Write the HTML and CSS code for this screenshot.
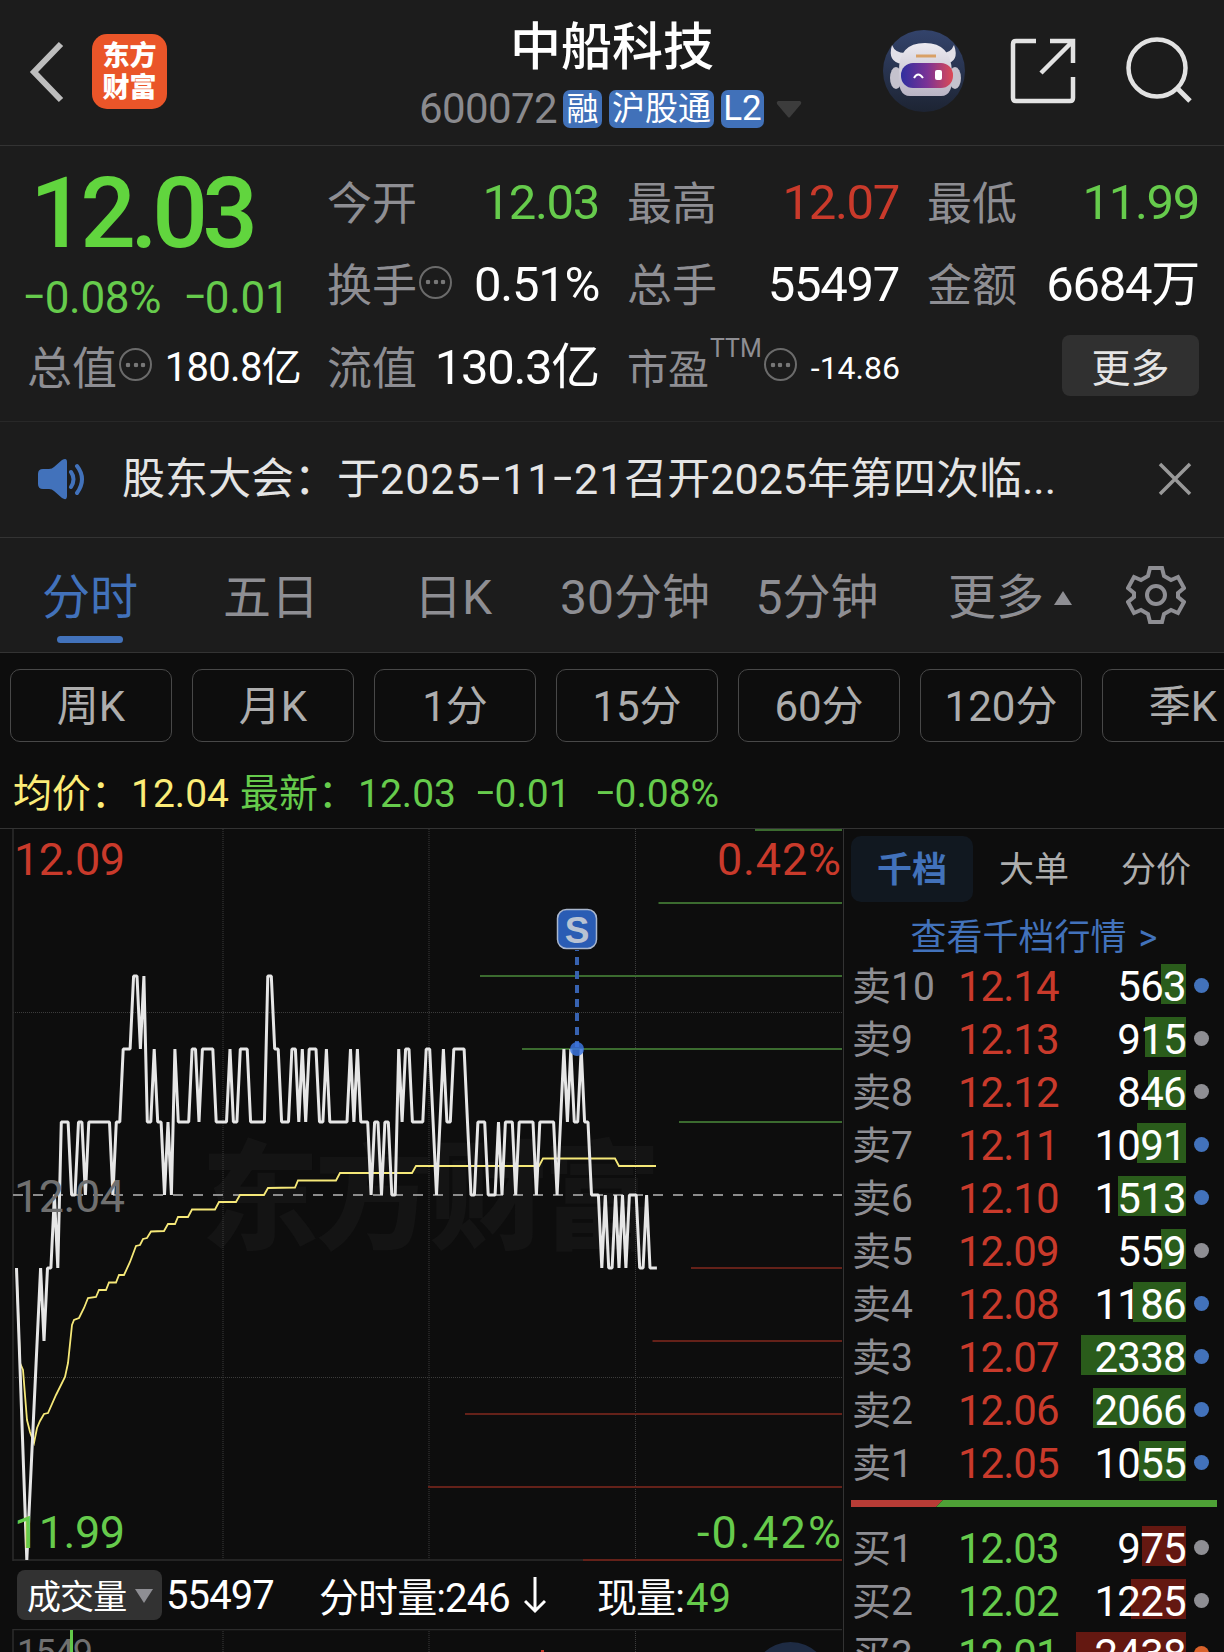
FILE: index.html
```html
<!DOCTYPE html>
<html lang="zh-CN">
<head>
  <meta charset="UTF-8">
  <title>中船科技 600072</title>
  <link rel="stylesheet" href="styles.css">
</head>
<body>
  <header class="topbar">
    <div class="topbar-left">
      <svg class="back" width="36" height="64" viewBox="0 0 36 64"><path d="M33 4 L6 32 L33 60" fill="none" stroke="#bdbdbd" stroke-width="6"/></svg>
      <div class="logo"><span>东方</span><span>财富</span></div>
    </div>
    <div class="stock">
      <h1>中船科技</h1>
      <div class="stock-sub">
        <span class="code">600072</span>
        <span class="tag tag-rong">融</span>
        <span class="tag tag-hgt">沪股通</span>
        <span class="tag tag-l2">L2</span>
        <svg class="caret" width="26" height="17" viewBox="0 0 26 17"><path d="M2 0h22q2 1 1 3L14 16q-1 1-2 0L1 3Q0 1 2 0z" fill="#3c3c3c"/></svg>
      </div>
    </div>
    <div class="topbar-right">
      <svg class="robot" width="82" height="82" viewBox="0 0 82 82">
        <defs>
          <linearGradient id="sky" x1="0" y1="0" x2="0" y2="1"><stop offset="0" stop-color="#33436b"/><stop offset="1" stop-color="#1d2433"/></linearGradient>
          <linearGradient id="visor"><stop offset="0" stop-color="#2f2f9f"/><stop offset=".5" stop-color="#7a3296"/><stop offset="1" stop-color="#dc4a55"/></linearGradient>
          <linearGradient id="helmet" x1="0" y1="0" x2="0" y2="1"><stop offset="0" stop-color="#eceaf0"/><stop offset="1" stop-color="#b9b4c4"/></linearGradient>
        </defs>
        <circle cx="41" cy="41" r="41" fill="url(#sky)"/>
        <path d="M19 34 Q4 32 9 15 Q12 23 22 23zM62 34 Q77 32 71 15 Q68 23 59 23z" fill="#e2e0e8"/>
        <ellipse cx="13" cy="48" rx="6" ry="11" fill="#c5c2cd"/>
        <ellipse cx="72" cy="48" rx="6" ry="11" fill="#c5c2cd"/>
        <path d="M16 42 Q15 13 42 13 Q68 13 69 42 Q71 66 58 66 H27 Q14 66 16 42z" fill="url(#helmet)"/>
        <rect x="18" y="33" width="52" height="25" rx="12" fill="url(#visor)"/>
        <path d="M31 48q4-7 9 0" fill="none" stroke="#fff" stroke-width="2"/>
        <rect x="52" y="40" width="7" height="10" rx="2" fill="#fff"/>
        <path d="M33 26h20" stroke="#d9a066" stroke-width="3"/>
      </svg>
      <svg class="share" width="66" height="66" viewBox="0 0 66 66"><path d="M26 3H6Q3 3 3 6v54q0 3 3 3h54q3 0 3-3V39M40 3h23v22M62 4L31 35" fill="none" stroke="#e2e2e2" stroke-width="4.5"/></svg>
      <svg class="search" width="68" height="68" viewBox="0 0 68 68"><circle cx="32" cy="32" r="28.500" fill="none" stroke="#e2e2e2" stroke-width="4.500"/><path d="M51 51L65 65" stroke="#e2e2e2" stroke-width="5"/></svg>
    </div>
  </header>

  <section class="quote">
    <div class="price-box">
      <div class="price">12.03</div>
      <div class="change"><span><s>-</s>0.08%</span><span><s>-</s>0.01</span></div>
    </div>
    <div class="cell"><label>今开</label><b class="down">12.03</b></div>
    <div class="cell"><label>最高</label><b class="up">12.07</b></div>
    <div class="cell"><label>最低</label><b class="down">11.99</b></div>
    <div class="cell"><label>换手</label><i class="dots"></i><b>0.51%</b></div>
    <div class="cell"><label>总手</label><b>55497</b></div>
    <div class="cell"><label>金额</label><b>6684万</b></div>
    <div class="cell"><label>总值</label><i class="dots"></i><b class="mid">180.8亿</b></div>
    <div class="cell"><label>流值</label><b>130.3亿</b></div>
    <div class="cell"><label class="pe">市盈<sup>TTM</sup></label><i class="dots"></i><b class="small">-14.86</b></div>
    <div class="cell"><button class="more">更多</button></div>
  </section>

  <section class="notice">
    <svg class="horn" width="50" height="42" viewBox="0 0 50 42">
      <path d="M1 16q0-5 5-5h6q3 0 5-2l8-7q5-3 5 2v34q0 5-5 2l-8-7q-2-2-5-2H6q-5 0-5-5z" fill="#4272bb"/>
      <path d="M34 14q5 7 0 15M40 8q10 13 0 27" fill="none" stroke="#4272bb" stroke-width="4" stroke-linecap="round"/>
    </svg>
    <p>股东大会：于<span class="date">2025<s>-</s>11<s>-</s>21</span>召开2025年第四次临...</p>
    <svg class="close" width="34" height="34" viewBox="0 0 34 34"><path d="M2 2L32 32M32 2L2 32" stroke="#999" stroke-width="3.500"/></svg>
  </section>

  <nav class="tabs">
    <a class="active">分时</a>
    <a>五日</a>
    <a>日K</a>
    <a>30分钟</a>
    <a>5分钟</a>
    <a class="tab-more">更多<i class="tri-up"></i></a>
    <svg class="gear" width="60" height="60" viewBox="0 0 60 60">
      <path d="M24 3h12l2 8 7 4 7-3 6 11-6 5v4l6 5-6 11-7-3-7 4-2 8H24l-2-8-7-4-7 3-6-11 6-5v-4l-6-5 6-11 7 3 7-4z" fill="none" stroke="#8e8e93" stroke-width="4"/>
      <circle cx="30" cy="30" r="9" fill="none" stroke="#8e8e93" stroke-width="4"/>
    </svg>
  </nav>

  <div class="periods">
    <a>周K</a><a>月K</a><a>1分</a><a>15分</a><a>60分</a><a>120分</a><a>季K</a>
  </div>

  <div class="legend">
    <span class="avg">均价：<span>12.04</span></span>
    <span class="last">最新：<span>12.03</span></span>
    <span class="diff"><s>-</s>0.01</span>
    <span class="pct"><s>-</s>0.08%</span>
  </div>

  <main class="board">
    <div class="chart-col">
      <svg class="chart" width="843" height="733" viewBox="0 829 843 733">
        <text class="watermark" x="201" y="1240" textLength="460">东方财富</text>
        <path class="grid" d="M223 829V1560M429 829V1560M635.500 829V1560M13 1012.500H842M13 1377.500H842"/>
        <path class="frame" d="M13 829V1561M13 1560H842"/>
        <g id="depth"></g>
        <path class="mid-line" d="M13 1195H842"/>
        <polyline class="avg-line" points="16.500,1268 20,1363 23,1370 27,1420 30,1432 34,1443 37,1428 40,1421 44,1414 48,1413 56,1395 65,1377 68,1363 72,1325 74,1320 79,1318 84,1308 88,1298 96,1297 99,1290 106,1290 109,1282.500 116,1282.500 119,1275 124,1275 130,1262 136,1246 140,1245 143,1239 147,1238 151,1231.500 164,1231 168,1224 175,1224 178,1217 188,1217 192,1209.500 215,1209.500 219,1202 236,1202 240,1195 264,1195 268,1188 295,1187.500 298,1180.500 336,1180.500 340,1173 412,1173 416,1166 539,1166 543,1158.500 615,1158.500 619,1166 656,1166"/>
        <polyline class="price-line" id="priceLine"/>
        <text class="axis up" x="14" y="875" textLength="111">12.09</text>
        <text class="axis flat" x="14" y="1212" textLength="111">12.04</text>
        <text class="axis down" x="14" y="1548" textLength="111">11.99</text>
        <text class="axis up" x="717" y="875" textLength="124">0.42%</text>
        <text class="axis down" x="697" y="1548" textLength="144">-0.42%</text>
        <path class="signal-line" d="M577 950V1047"/>
        <circle cx="577" cy="1049" r="7" fill="#3c76df" fill-opacity=".85"/>
        <rect x="557.500" y="909.500" width="39" height="39" rx="9" fill="#2a5cb4" stroke="#a9b6cd" stroke-width="1.500"/>
        <text class="signal" x="577" y="943" text-anchor="middle">S</text>
      </svg>
      <div class="vol-bar">
        <span class="vol-pick">成交量<i class="tri-down"></i></span>
        <span class="vol-total">55497</span>
        <span class="vol-min">分时量:246</span>
        <svg class="arrow" width="22" height="38" viewBox="0 0 22 38"><path d="M11 1V35M1 25L11 35L21 25" fill="none" stroke="#fff" stroke-width="3"/></svg>
        <span class="vol-now">现量:<em>49</em></span>
      </div>
      <svg class="vol-chart" width="843" height="24" viewBox="0 1629 843 24">
        <path class="grid" d="M223 1629V1653M429 1629V1653M635.500 1629V1653"/>
        <path class="frame" d="M13 1653V1629.500H842"/>
        <text class="vol-axis" x="17" y="1665" textLength="76">1549</text>
        <path d="M71.500 1630V1653" stroke="#62c84a" stroke-width="3"/>
        <path d="M542.500 1650V1653" stroke="#c93a2b" stroke-width="3"/>
        <circle cx="790.500" cy="1681" r="39" fill="#1e2b43"/>
      </svg>
    </div>

    <aside class="depth-col">
      <div class="depth-tabs"><a class="active">千档</a><a>大单</a><a>分价</a></div>
      <a class="depth-link">查看千档行情 <span>&gt;</span></a>
      <div class="orders" id="sells"></div>
      <svg class="ratio" width="366" height="7" viewBox="0 0 366 7"><path d="M0 0H92L85 7H0z" fill="#b83c36"/><path d="M92 0H366V7H85z" fill="#4ea136"/></svg>
      <div class="orders" id="buys"></div>
    </aside>
  </main>

  <script>
    // last digit of each minute's price above 12.00, from the 8th minute on
    const minutes = [
      '32334355544554', '5555555455', '6667767556', '5545465555', '6656666555', '5655666555',
      '5577665556', '6565666556', '5555556565', '5545545544', '6566555566', '5456556666',
      '5445554445', '4555455555', '4555554565', '6556554443', '4334343444', '334333'
    ].join('');
    const levelY = level => 1195 + (4 - level) * 73;
    const minuteX = i => (16.5 + i * 3.443).toFixed(1);

    const points = [`16.5,${levelY(3)}`, `${minuteX(3)},${levelY(-1)}`];
    minutes.split('').forEach((level, i) => {
      points.push(`${minuteX(i + 7)},${levelY(Number(level))}`);
    });
    document.getElementById('priceLine').setAttribute('points', points.join(' '));

    // left end of each resting-order line, top to bottom
    const depthLines = [
      [755, 830, 'ask'], [658.5, 903, 'ask'], [480, 976, 'ask'], [522, 1049, 'ask'], [679, 1122, 'ask'],
      [691, 1268, 'bid'], [652.5, 1341, 'bid'], [465, 1414, 'bid'], [428, 1487, 'bid'], [583, 1560, 'bid']
    ];
    document.getElementById('depth').innerHTML = depthLines
      .map(([x, y, side]) => `<path class="${side}" d="M${x} ${y}H842"/>`).join('');

    const sells = [
      ['卖10', '12.14', 563, 25, 'blue'],
      ['卖9', '12.13', 915, 41, 'gray'],
      ['卖8', '12.12', 846, 38, 'gray'],
      ['卖7', '12.11', 1091, 49, 'blue'],
      ['卖6', '12.10', 1513, 68, 'blue'],
      ['卖5', '12.09', 559, 25, 'gray'],
      ['卖4', '12.08', 1186, 53, 'blue'],
      ['卖3', '12.07', 2338, 105, 'blue'],
      ['卖2', '12.06', 2066, 93, 'blue'],
      ['卖1', '12.05', 1055, 47, 'blue']
    ];
    const buys = [
      ['买1', '12.03', 975, 44, 'gray'],
      ['买2', '12.02', 1225, 55, 'gray'],
      ['买3', '12.01', 2438, 110, 'orange']
    ];

    function renderOrders(id, rows, priceClass) {
      document.getElementById(id).innerHTML = rows.map(([name, price, vol, bar, dot]) => `
        <div class="order">
          <span class="name">${name}</span>
          <span class="quote-price ${priceClass}">${price}</span>
          <span class="vol"><i class="bar" style="width: ${bar}px"></i><span>${vol}</span></span>
          <i class="dot ${dot}"></i>
        </div>`).join('');
    }
    renderOrders('sells', sells, 'up');
    renderOrders('buys', buys, 'down');
  </script>
</body>
</html>
```

FILE: styles.css
```css
* { box-sizing: border-box; }
body { margin: 0; width: 1224px; height: 1652px; overflow: hidden; background: #0d0d0d; color: #fff; font-family: Roboto, "Noto Sans CJK SC", sans-serif; }
svg { display: block; flex: none; }
i, em { font-style: normal; }
.up { color: #c93a2b; fill: #c93a2b; }
.down { color: #66cb4c; fill: #66cb4c; }
/* wide minus sign */
s { display: inline-block; margin: 0 .1em; text-decoration: none; transform: scaleX(1.6) translateY(-5%); }

/* top bar */
.topbar { display: grid; grid-template-columns: 419px 1fr 360px; height: 146px; background: #1c1c1c; border-bottom: 1px solid #333; }
.topbar-left { display: flex; align-items: flex-start; padding: 34px 0 0 28px; }
.back { margin-top: 6px; }
.logo { display: flex; flex-direction: column; align-items: center; justify-content: center; width: 75px; height: 75px; margin-left: 28px; border-radius: 15px; background: #ea5529; font-size: 27px; font-weight: 900; line-height: 32px; }
.stock { padding-top: 17px; }
.stock h1 { margin: 0 0 0 91px; font-size: 51px; font-weight: 500; line-height: 62px; white-space: nowrap; }
.stock-sub { display: flex; align-items: center; height: 38px; margin-top: 11px; white-space: nowrap; }
.code { width: 142px; color: #8a8a8e; font-size: 42px; letter-spacing: -0.6px; line-height: 38px; }
.tag { height: 38px; border-radius: 7px; background: #4171b9; font-size: 32px; line-height: 38px; text-align: center; }
.tag-rong { width: 39px; margin-left: 2px; }
.tag-hgt { width: 105px; margin-left: 7px; font-size: 33px; }
.tag-l2 { width: 43px; margin-left: 7px; font-size: 35px; }
.caret { margin-left: 12px; }
.topbar-right { display: flex; align-items: flex-start; }
.robot { margin: 30px 0 0 19px; }
.share { margin: 38px 0 0 45px; }
.search { margin: 36px 0 0 49px; }

/* quote */
.quote { display: grid; grid-template-columns: repeat(4, 270px); grid-template-rows: repeat(3, 82.5px); column-gap: 30px; height: 276px; padding: 15px 27px; background: #1c1c1c; border-bottom: 1px solid #282828; }
.price-box { grid-row: span 2; }
.price { height: 106px; margin-left: 3px; color: #61d53e; font-size: 98px; font-weight: 500; letter-spacing: -5.500px; line-height: 106px; }
.change { display: flex; gap: 23px; margin-left: -3px; color: #66cb4c; font-size: 44px; line-height: 62px; letter-spacing: -0.300px; white-space: nowrap; }
.cell { display: flex; align-items: center; white-space: nowrap; }
.cell label { padding-top: 5px; color: #8e8e93; font-size: 45px; line-height: 60px; }
.cell b { margin: 1px -2px 0 auto; font-size: 49px; font-weight: 400; letter-spacing: -1.300px; line-height: 60px; }
.cell b.mid { margin-right: -4px; font-size: 40px; letter-spacing: -0.700px; }
.cell b.small { margin-right: -3px; font-size: 32px; letter-spacing: 0; }
.cell .pe { display: flex; font-size: 41px; }
.pe sup { margin: -4px 0 0 1px; font-size: 25px; line-height: 26px; }
.dots { flex: none; width: 33px; height: 33px; margin: -5px 0 0 2px; border: 2px solid #6b6b6b; border-radius: 50%; background: radial-gradient(circle, #777 2px, transparent 2.600px) center / 8px 8px no-repeat, radial-gradient(circle, #777 2px, transparent 2.600px) 3px center / 8px 8px no-repeat, radial-gradient(circle, #777 2px, transparent 2.600px) 18px center / 8px 8px no-repeat; }
.more { width: 137px; height: 61px; margin: -3px -2px 0 auto; padding: 0 0 2px; border: 0; border-radius: 8px; background: #303030; color: #e4e4e4; font: 39px Roboto, "Noto Sans CJK SC", sans-serif; }

/* notice */
.notice { display: flex; align-items: center; height: 116px; padding: 0 32px 2px 37px; background: #1c1c1c; border-bottom: 1px solid #333; }
.notice p { flex: 1; margin: 0 0 0 35px; color: #e4e4e4; font-size: 43px; line-height: 60px; white-space: nowrap; }
.date { letter-spacing: 1px; }

/* tabs */
.tabs { display: grid; grid-template-columns: 180px 182px 182px 182px 182px 184px 1fr; align-items: center; height: 115px; background: #1c1c1c; border-bottom: 1px solid #333; }
.tabs a { position: relative; height: 114px; padding-top: 3px; color: #8e8e93; font-size: 48px; line-height: 114px; text-align: center; white-space: nowrap; }
.tabs .active { color: #4272bb; }
.tabs .active::after { content: ""; position: absolute; left: 57px; bottom: 9px; width: 66px; height: 7px; border-radius: 4px; background: #4272bb; }
.tri-up { display: inline-block; margin: 0 0 9px 10px; border: 9px solid transparent; border-top: 0; border-bottom: 14px solid #8e8e93; }
.tabs .tab-more { padding-left: 20px; }
.gear { margin-left: 34px; }

/* period chips */
.periods { display: flex; gap: 20px; padding: 16px 0 0 10px; overflow: hidden; }
.periods a { flex: none; width: 162px; height: 73px; border: 1.500px solid #484848; border-radius: 10px; color: #adadad; font-size: 42px; line-height: 73px; text-align: center; }

.legend { display: flex; height: 87px; padding: 23px 0 0 13px; font-size: 39px; line-height: 58px; white-space: nowrap; color: #66cb4c; border-bottom: 1px solid #333; }
.avg { width: 227px; color: #fbec77; }
.avg span, .last span { margin-left: 1px; }
.last { width: 236px; }
.diff { width: 120px; }

/* chart */
.board { display: grid; grid-template-columns: 844px 1fr; height: 823px; }
.chart-col { border-right: 1px solid #333; }
.watermark { fill: #141414; font-size: 118px; font-weight: 900; }
.grid { fill: none; stroke: #3c3c3c; stroke-dasharray: 1 1; }
.frame { fill: none; stroke: #2c2c2c; stroke-width: 1.500; }
.mid-line { stroke: #8c8c8c; stroke-width: 2; stroke-dasharray: 10 10; }
.ask { stroke: #3b6b2f; stroke-width: 2; }
.bid { stroke: #642119; stroke-width: 2; }
.avg-line { fill: none; stroke: #f5e878; stroke-width: 1.800; }
.price-line { fill: none; stroke: #e6e6e6; stroke-width: 3; stroke-linejoin: bevel; }
.axis { font-size: 45px; }
.flat { fill: #707070; }
.signal-line { stroke: #3762b0; stroke-width: 4; stroke-dasharray: 8 6; stroke-dashoffset: 7; }
.signal { fill: #b9c3d3; font: bold 37px "Liberation Sans", sans-serif; }

/* volume */
.vol-bar { display: flex; align-items: center; height: 67px; padding: 0 0 1px 17px; font-size: 40px; letter-spacing: -0.900px; white-space: nowrap; }
.vol-pick { display: flex; align-items: center; width: 145px; height: 50px; padding: 0 0 2px 10px; border-radius: 8px; background: #323232; font-size: 34px; }
.tri-down { margin: 4px 0 0 9px; border: 9px solid transparent; border-bottom: 0; border-top: 14px solid #8e8e93; }
.vol-total { width: 153px; margin-left: 4px; }
.vol-min { width: 205px; }
.vol-now { margin-left: 51px; }
.vol-now em { margin-left: 2px; color: #66cb4c; letter-spacing: 0; }
.vol-axis { fill: #707070; font-size: 36px; }

/* order book */
.depth-col { padding: 7px 7px 0; }
.depth-tabs { display: grid; grid-template-columns: repeat(3, 1fr); text-align: center; font-size: 35px; line-height: 70px; color: #adadad; }
.depth-tabs a { height: 66px; border-radius: 10px; }
.depth-tabs .active { background: #111820; color: #4272bb; font-weight: 700; }
.depth-link { display: block; height: 57px; padding-top: 8px; color: #4272bb; font-size: 36px; line-height: 56px; text-align: center; }
.depth-link span { margin-left: 3px; }
.order { display: grid; grid-template-columns: 107px 106px 122px 31px; align-items: center; height: 53px; font-size: 42px; line-height: 53px; }
.name { padding: 2px 0 0 1px; color: #8e8e93; font-size: 39px; }
.quote-price { letter-spacing: -1px; }
.vol { position: relative; height: 53px; text-align: right; letter-spacing: -0.700px; }
.vol span { position: relative; }
.bar { position: absolute; right: 0; top: 4px; height: 40px; background: #2a5c1b; }
#buys .bar { background: #641811; }
.dot { width: 15px; height: 15px; margin: -3px 0 0 8px; border-radius: 50%; }
.blue { background: #4272bb; }
.gray { background: #8e8e93; }
.orange { background: #d9622b; }
.ratio { margin: 11px 0 14px; }
```
